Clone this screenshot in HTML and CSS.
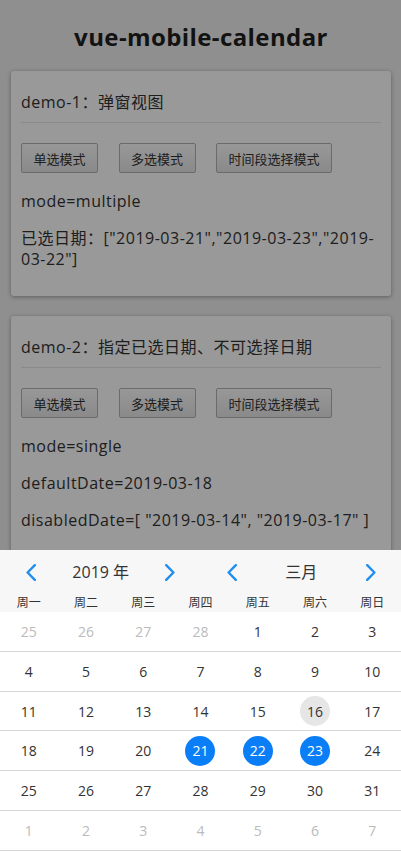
FILE: index.html
```html
<!DOCTYPE html>
<html lang="zh">
<head>
<meta charset="utf-8">
<title>vue-mobile-calendar</title>
<link rel="stylesheet" href="styles.css">
</head>
<body>
<div class="app">
  <h1 class="page-title">vue-mobile-calendar</h1>

  <section class="card">
    <div class="card-title">demo-1：弹窗视图</div>
    <div class="btn-row">
      <button class="btn">单选模式</button>
      <button class="btn">多选模式</button>
      <button class="btn">时间段选择模式</button>
    </div>
    <p class="line">mode=multiple</p>
    <p class="line">已选日期：["2019-03-21","2019-03-23","2019-03-22"]</p>
  </section>

  <section class="card card-tall">
    <div class="card-title">demo-2：指定已选日期、不可选择日期</div>
    <div class="btn-row">
      <button class="btn">单选模式</button>
      <button class="btn">多选模式</button>
      <button class="btn">时间段选择模式</button>
    </div>
    <p class="line">mode=single</p>
    <p class="line">defaultDate=2019-03-18</p>
    <p class="line">disabledDate=[ "2019-03-14", "2019-03-17" ]</p>
  </section>
</div>

<div class="mask"></div>

<div class="calendar">
  <div class="cal-head">
    <div class="cal-nav">
      <div class="nav-half">
        <svg class="arrow" viewBox="0 0 10 17" width="10" height="17"><path d="M8.8 1.2 L1.6 8.5 L8.8 15.8"/></svg>
        <span class="nav-text">2019 年</span>
        <svg class="arrow" viewBox="0 0 10 17" width="10" height="17"><path d="M1.2 1.2 L8.4 8.5 L1.2 15.8"/></svg>
      </div>
      <div class="nav-half">
        <svg class="arrow" viewBox="0 0 10 17" width="10" height="17"><path d="M8.8 1.2 L1.6 8.5 L8.8 15.8"/></svg>
        <span class="nav-text">三月</span>
        <svg class="arrow" viewBox="0 0 10 17" width="10" height="17"><path d="M1.2 1.2 L8.4 8.5 L1.2 15.8"/></svg>
      </div>
    </div>
    <div class="weekdays">
      <span>周一</span><span>周二</span><span>周三</span><span>周四</span><span>周五</span><span>周六</span><span>周日</span>
    </div>
  </div>
  <div class="cal-body">
    <div class="week">
      <span class="day other"><i>25</i></span><span class="day other"><i>26</i></span><span class="day other"><i>27</i></span><span class="day other"><i>28</i></span><span class="day"><i>1</i></span><span class="day"><i>2</i></span><span class="day"><i>3</i></span>
    </div>
    <div class="week">
      <span class="day"><i>4</i></span><span class="day"><i>5</i></span><span class="day"><i>6</i></span><span class="day"><i>7</i></span><span class="day"><i>8</i></span><span class="day"><i>9</i></span><span class="day"><i>10</i></span>
    </div>
    <div class="week">
      <span class="day"><i>11</i></span><span class="day"><i>12</i></span><span class="day"><i>13</i></span><span class="day"><i>14</i></span><span class="day"><i>15</i></span><span class="day today"><i>16</i></span><span class="day"><i>17</i></span>
    </div>
    <div class="week">
      <span class="day"><i>18</i></span><span class="day"><i>19</i></span><span class="day"><i>20</i></span><span class="day selected"><i>21</i></span><span class="day selected"><i>22</i></span><span class="day selected"><i>23</i></span><span class="day"><i>24</i></span>
    </div>
    <div class="week">
      <span class="day"><i>25</i></span><span class="day"><i>26</i></span><span class="day"><i>27</i></span><span class="day"><i>28</i></span><span class="day"><i>29</i></span><span class="day"><i>30</i></span><span class="day"><i>31</i></span>
    </div>
    <div class="week">
      <span class="day other"><i>1</i></span><span class="day other"><i>2</i></span><span class="day other"><i>3</i></span><span class="day other"><i>4</i></span><span class="day other"><i>5</i></span><span class="day other"><i>6</i></span><span class="day other"><i>7</i></span>
    </div>
  </div>
</div>
</body>
</html>
```

FILE: styles.css
```css
* { box-sizing: border-box; }

html, body {
  margin: 0;
  padding: 0;
}

body {
  background: #eeeeee;
  color: #333333;
  font-family: "Open Sans", "Noto Sans CJK SC", sans-serif;
  font-size: 16px;
  line-height: 21px;
  letter-spacing: 0.5px;
}

.app {
  padding: 0 10px 0 11px;
}

.page-title {
  margin: 0;
  padding: 21px 0 18px;
  font-size: 24px;
  line-height: 32px;
  font-weight: 700;
  text-align: center;
  color: #1e1e1e;
  letter-spacing: 0.4px;
}

.card {
  background: #ffffff;
  border-radius: 3px;
  box-shadow: 0 1px 4px rgba(0, 0, 0, 0.35);
  padding: 10px;
  margin-bottom: 20px;
}

.card-tall {
  padding-bottom: 40px;
}

.card-title {
  padding: 11px 0 9px;
  border-bottom: 1px solid #e6e6e6;
}

.btn-row {
  display: flex;
  gap: 20.5px;
  margin-top: 20px;
  padding-bottom: 2px;
}

.btn {
  height: 30px;
  padding: 0 11.5px;
  font-family: "Open Sans", "Noto Sans CJK SC", sans-serif;
  font-size: 13px;
  letter-spacing: 0;
  color: #333333;
  border: 1px solid #b2b2b2;
  border-radius: 2px;
  background: linear-gradient(#fdfdfd, #e6e6e6);
}

.line {
  margin: 16px 0;
}

.mask {
  position: fixed;
  inset: 0;
  background: rgba(0, 0, 0, 0.4);
  z-index: 1;
}

.calendar {
  position: fixed;
  left: 0;
  right: 0;
  bottom: 0;
  height: 301px;
  background: #ffffff;
  z-index: 2;
  display: flex;
  flex-direction: column;
  letter-spacing: 0;
}

.cal-head {
  background: #f7f7f7;
  height: 62px;
}

.cal-nav {
  display: flex;
  height: 44px;
}

.nav-half {
  flex: 1;
  display: flex;
  align-items: center;
  justify-content: space-between;
  padding: 0 25px 0 26px;
}

.arrow path {
  fill: none;
  stroke: #1f8ef1;
  stroke-width: 2.4;
  stroke-linecap: round;
  stroke-linejoin: round;
}

.nav-text {
  font-size: 16px;
  color: #333333;
}

.weekdays {
  display: grid;
  grid-template-columns: repeat(7, 1fr);
  height: 18px;
  font-size: 12px;
  line-height: 18px;
  text-align: center;
  color: #333333;
}

.cal-body {
  flex: 1;
  display: grid;
  grid-template-rows: repeat(6, 1fr);
}

.week {
  display: grid;
  grid-template-columns: repeat(7, 1fr);
  border-bottom: 1px solid #d6d6d6;
}

.day {
  display: flex;
  align-items: center;
  justify-content: center;
  font-size: 14px;
  color: #333333;
}

.day i {
  font-style: normal;
  width: 30px;
  height: 30px;
  border-radius: 50%;
  display: flex;
  align-items: center;
  justify-content: center;
}

.day.other { color: #bbbbbb; }

.day.today i { background: #e6e6e6; }

.day.selected i {
  background: #0a7ef7;
  color: #ffffff;
}
```
